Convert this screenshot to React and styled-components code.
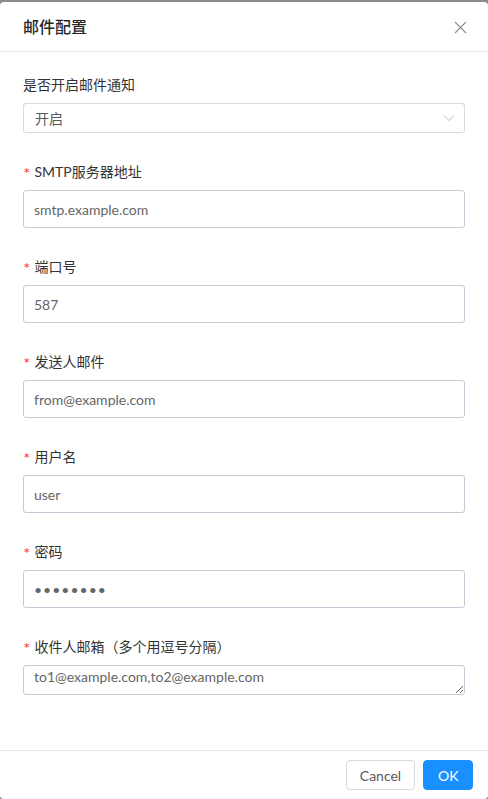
import React from 'react'
import styled, { createGlobalStyle } from 'styled-components'

const GlobalStyle = createGlobalStyle`
  html, body {
    margin: 0;
    padding: 0;
    background: #8c8c8c;
    font-family: Lato, "Noto Sans CJK SC", sans-serif;
  }
  * { box-sizing: border-box; }
`

const Page = styled.div`
  padding-top: 2px;
  height: 799px;
  overflow: hidden;
`

const Modal = styled.div`
  background: #fff;
  border-radius: 4px;
  height: 797px;
  display: flex;
  flex-direction: column;
`

const Header = styled.div`
  display: flex;
  align-items: center;
  justify-content: space-between;
  padding: 14px 20px 13px 23px;
  border-bottom: 1px solid #e8e8e8;
`

const Title = styled.div`
  font-size: 16px;
  line-height: 22px;
  font-weight: 500;
  color: #262626;
`

const Close = styled.button`
  border: 0;
  background: none;
  padding: 0;
  width: 16px;
  height: 16px;
  display: flex;
  align-items: center;
  justify-content: center;
  cursor: pointer;
`

const Body = styled.div`
  flex: 1;
  padding: 22px 23px 0;
`

const Field = styled.div`
  margin-bottom: 28px;
`

const Label = styled.div`
  font-size: 14px;
  line-height: 22px;
  color: #333;
  margin-bottom: 7px;
  display: flex;
  align-items: center;
`

const Star = styled.span`
  color: #f5222d;
  font-family: "DejaVu Sans", sans-serif;
  font-size: 11px;
  margin-right: 5px;
  margin-left: 1px;
  position: relative;
  top: 1px;
`

const SelectBox = styled.div`
  height: 30px;
  border: 1px solid #d9d9d9;
  border-radius: 3px;
  display: flex;
  align-items: center;
  justify-content: space-between;
  padding: 0 9px 0 11px;
  font-size: 14px;
  color: #595959;
`

const Input = styled.input`
  display: block;
  width: 100%;
  height: 38px;
  border: 1px solid #c8c8d6;
  border-radius: 3px;
  padding: 0 10px;
  font-family: Lato, "Noto Sans CJK SC", sans-serif;
  font-size: 14px;
  color: #666;
  outline: none;
  letter-spacing: ${p => (p.type === 'password' ? '1px' : '0')};
`

const TextArea = styled.textarea`
  display: block;
  width: 100%;
  height: 30px;
  border: 1px solid #c8c8d6;
  border-radius: 3px;
  padding: 1px 10px;
  font-family: Lato, "Noto Sans CJK SC", sans-serif;
  font-size: 14px;
  line-height: 20px;
  color: #666;
  outline: none;
  resize: vertical;
`

const Footer = styled.div`
  border-top: 1px solid #e8e8e8;
  padding: 9px 15px;
  display: flex;
  justify-content: flex-end;
  gap: 8px;
`

const Button = styled.button`
  height: 30px;
  padding: 0 ${p => (p.primary ? '14px' : '11px')};
  border-radius: 4px;
  font-family: Lato, sans-serif;
  font-size: 14px;
  border: 1px solid ${p => (p.primary ? '#1890ff' : '#d9d9d9')};
  background: ${p => (p.primary ? '#1890ff' : '#fff')};
  color: ${p => (p.primary ? '#fff' : '#595959')};
  width: ${p => (p.primary ? '50px' : '69px')};
`

const fields = [
  { label: 'SMTP服务器地址', value: 'smtp.example.com' },
  { label: '端口号', value: '587' },
  { label: '发送人邮件', value: 'from@example.com' },
  { label: '用户名', value: 'user' },
  { label: '密码', value: 'password', type: 'password' },
]

export default function App() {
  return (
    <Page>
      <GlobalStyle />
      <Modal>
        <Header>
          <Title>邮件配置</Title>
          <Close>
            <svg width="13" height="13" viewBox="0 0 13 13">
              <path d="M1 1L12 12M12 1L1 12" stroke="#8c8c8c" strokeWidth="1.1" fill="none" />
            </svg>
          </Close>
        </Header>
        <Body>
          <Field>
            <Label>是否开启邮件通知</Label>
            <SelectBox>
              <span>开启</span>
              <svg width="12" height="8" viewBox="0 0 12 8">
                <path d="M1 1.5L6 6.5L11 1.5" stroke="#c0c0c0" strokeWidth="1" fill="none" />
              </svg>
            </SelectBox>
          </Field>
          {fields.map(f => (
            <Field key={f.label}>
              <Label><Star>*</Star>{f.label}</Label>
              <Input type={f.type || 'text'} defaultValue={f.value} />
            </Field>
          ))}
          <Field>
            <Label><Star>*</Star>收件人邮箱（多个用逗号分隔）</Label>
            <TextArea defaultValue="to1@example.com,to2@example.com" />
          </Field>
        </Body>
        <Footer>
          <Button>Cancel</Button>
          <Button primary>OK</Button>
        </Footer>
      </Modal>
    </Page>
  )
}
